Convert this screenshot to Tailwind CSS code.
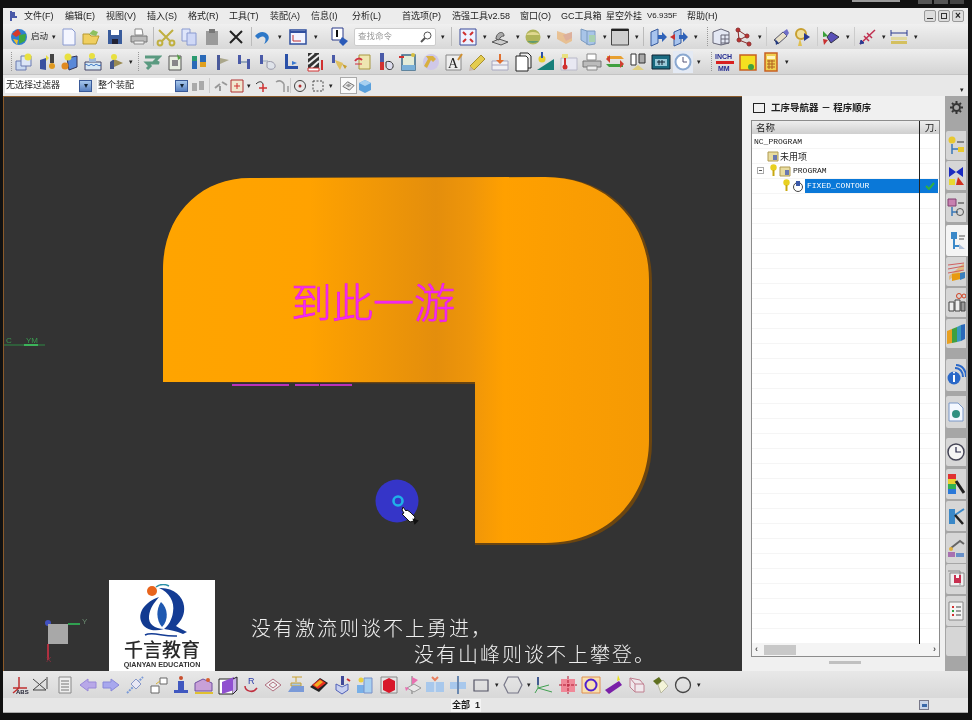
<!DOCTYPE html>
<html lang="zh-CN">
<head>
  <meta charset="UTF-8">
  <title>NX - 工序导航器</title>
  <script src="https://cdn.jsdelivr.net/npm/@tailwindcss/browser@4"></script>
</head>
<body class="bg-[#111]">
<div class="w-[972px] h-[720px] overflow-hidden flex flex-col bg-[#111] text-[#222] font-['Liberation_Sans','Noto_Sans_CJK_SC',sans-serif] blur-[0.5px]">
  <!-- title bar, cut off by the recording -->
  <div class="h-[8px] shrink-0 relative overflow-hidden">
    <span class="absolute left-[852px] top-0 w-[48px] h-[2px] bg-[#999]"></span>
    <span class="absolute left-[918px] top-0 w-[14px] h-[4px] bg-[#555]"></span>
    <span class="absolute left-[934px] top-0 w-[14px] h-[4px] bg-[#555]"></span>
    <span class="absolute left-[950px] top-0 w-[14px] h-[4px] bg-[#444]"></span>
  </div>

  <div class="ml-[3px] w-[965px] flex flex-col bg-[#e4e4e4]">
    <!-- menu -->
    <div class="h-[16px] flex items-center text-[9px] leading-none bg-[#ececec] whitespace-nowrap">
      <svg class="w-[12px] h-[12px] ml-[5px]" viewBox="0 0 12 12"><path d="M3 1v10M3 3h3v2H3M3 7h6" stroke="#4a5aa8" stroke-width="2" fill="none"/></svg>
      <span class="ml-[4px] w-[31px]">文件(F)</span>
      <span class="ml-[10px] w-[31px]">编辑(E)</span>
      <span class="ml-[10px] w-[31px]">视图(V)</span>
      <span class="ml-[10px] w-[31px]">插入(S)</span>
      <span class="ml-[10px] w-[31px]">格式(R)</span>
      <span class="ml-[10px] w-[31px]">工具(T)</span>
      <span class="ml-[10px] w-[31px]">装配(A)</span>
      <span class="ml-[10px] w-[31px]">信息(I)</span>
      <span class="ml-[10px] w-[31px]">分析(L)</span>
      <span class="ml-[19px] w-[40px]">首选项(P)</span>
      <span class="ml-[10px] w-[59px]">浩强工具v2.58</span>
      <span class="ml-[9px] w-[31px]">窗口(O)</span>
      <span class="ml-[10px] w-[36px]">GC工具箱</span>
      <span class="ml-[9px] w-[36px]">星空外挂</span>
      <span class="ml-[5px] w-[31px] text-[8px]">V6.935F</span>
      <span class="ml-[9px] w-[31px]">帮助(H)</span>
      <span class="ml-auto flex gap-[2px] mr-[4px]">
        <span class="w-[12px] h-[12px] border border-[#999] rounded-[2px] bg-[#ddd] flex items-end justify-center pb-[2px]"><i class="block w-[6px] h-[1px] bg-[#333]"></i></span>
        <span class="w-[12px] h-[12px] border border-[#999] rounded-[2px] bg-[#ddd] flex items-center justify-center"><i class="block w-[6px] h-[6px] border border-[#333]"></i></span>
        <span class="w-[12px] h-[12px] border border-[#999] rounded-[2px] bg-[#ddd] flex items-center justify-center text-[10px] font-bold">×</span>
      </span>
    </div>

    <!-- toolbar 1 -->
    <div class="h-[25px] flex items-center bg-gradient-to-b from-[#f0f0f0] to-[#d8d8d8]">
      <svg class="w-5 h-5 ml-[6px]" viewBox="0 0 20 20"><circle cx="10" cy="10" r="8" fill="#2f7fd0"/><path d="M3 7l6-5 3 5-5 3z" fill="#d83a2a"/><path d="M10 8l7-1-1 7-6 3z" fill="#3fa83f"/><path d="M4 12l5 1-1 5z" fill="#f0c030"/></svg>
      <span class="ml-[2px] w-[17px] text-[8.5px] leading-none">启动</span>
      <span class="ml-[3px] w-[6px] text-center text-[7px] leading-none">▾</span>
      <svg class="w-5 h-5 ml-[2px]" viewBox="0 0 20 20"><path d="M4 2h9l3 3v13H4z" fill="#f4f6ff" stroke="#8a9ad0"/></svg>
      <svg class="w-5 h-5 ml-[2px]" viewBox="0 0 20 20"><path d="M2 7h6l2 2h8l-3 8H2z" fill="#f0cf60" stroke="#b89a30"/><path d="M8 7l4-4 5 2-2 4z" fill="#8cc060"/></svg>
      <svg class="w-5 h-5 ml-[4px]" viewBox="0 0 20 20"><path d="M3 3h14v14H3z" fill="#3a5c9c"/><path d="M6 3h8v5H6z" fill="#fff"/><path d="M7 12h6v5H7z" fill="#223"/></svg>
      <svg class="w-5 h-5 ml-[4px]" viewBox="0 0 20 20"><path d="M6 2h7l1 6H6z" fill="#fff" stroke="#888"/><path d="M2 9h16v6H2z" fill="#bbb" stroke="#777"/><path d="M5 14h10v3H5z" fill="#eee" stroke="#888"/></svg>
      <i class="block w-px h-[19px] ml-[4px] bg-[#bbb]"></i>
      <svg class="w-5 h-5 ml-[2px]" viewBox="0 0 20 20" fill="none" stroke="#c0b040" stroke-width="2"><path d="M3 3l11 11M17 3L6 14"/><circle cx="4" cy="16" r="2.4"/><circle cx="16" cy="16" r="2.4"/></svg>
      <svg class="w-5 h-5 ml-[3px]" viewBox="0 0 20 20"><path d="M3 2h8v12H3z" fill="#dfe6fa" stroke="#8a9ad0"/><path d="M8 6h9v12H8z" fill="#cfd8f6" stroke="#8a9ad0"/></svg>
      <svg class="w-5 h-5 ml-[3px]" viewBox="0 0 20 20"><path d="M4 4h12v14H4z" fill="#9a9a9a"/><path d="M7 2h6v4H7z" fill="#777"/></svg>
      <svg class="w-5 h-5 ml-[4px]" viewBox="0 0 20 20"><path d="M4 4l12 12M16 4L4 16" stroke="#222" stroke-width="2"/></svg>
      <i class="block w-px h-[19px] ml-[5px] bg-[#bbb]"></i>
      <svg class="w-5 h-5" viewBox="0 0 20 20"><path d="M3 9c4-5 10-5 13-1 2 3 0 7-4 9 2-3 2-6 0-7-2-1-4 0-6 2l-3-3z" fill="#2d78c8"/></svg>
      <span class="ml-[5px] w-[6px] text-center text-[7px] leading-none">▾</span>
      <svg class="w-5 h-5 ml-[5px]" viewBox="0 0 20 20"><path d="M2 3h16v14H2z" fill="#f2f4ff" stroke="#2f4f9f" stroke-width="1.5"/><path d="M2 5h16" stroke="#2f4f9f" stroke-width="2"/><path d="M5 8v6h8" stroke="#c03030" fill="none"/></svg>
      <span class="ml-[5px] w-[6px] text-center text-[7px] leading-none">▾</span>
      <svg class="w-5 h-5 ml-[10px]" viewBox="0 0 20 20"><path d="M3 1h11v12H3z" fill="#fff" stroke="#2a3a8a"/><path d="M8 3v7" stroke="#111" stroke-width="2"/><path d="M13 10l6 4-5 5-4-4z" fill="#2a5ab8"/></svg>
      <div class="ml-[5px] w-[82px] h-[18px] bg-white border border-[#ccc] rounded-[2px] flex items-center px-[3px] text-[8.5px] text-[#999] leading-none shrink-0">
        查找命令
        <svg class="w-[12px] h-[12px] ml-auto" viewBox="0 0 12 12" fill="none" stroke="#555"><circle cx="7.5" cy="4.5" r="3.5"/><path d="M5 7l-4 4" stroke-width="2"/></svg>
      </div>
      <span class="ml-[4px] w-[6px] text-center text-[7px] leading-none">▾</span>
      <i class="block w-px h-[19px] ml-[5px] bg-[#bbb]"></i>
      <svg class="w-5 h-5 ml-[6px]" viewBox="0 0 20 20"><path d="M2 2h16v16H2z" fill="#eef2ff" stroke="#3a4a9a"/><path d="M5 5l3 3M15 5l-3 3M5 15l3-3M15 15l-3-3" stroke="#d03030" stroke-width="2"/></svg>
      <span class="ml-[4px] w-[6px] text-center text-[7px] leading-none">▾</span>
      <svg class="w-5 h-5 ml-[2px]" viewBox="0 0 20 20"><path d="M2 15l7-3 9 3-7 3z" fill="#ccc" stroke="#555"/><path d="M6 12c0-7 8-9 8-3-2 0-4 1-5 4z" fill="#aaa" stroke="#555"/></svg>
      <span class="ml-[5px] w-[6px] text-center text-[7px] leading-none">▾</span>
      <svg class="w-5 h-5 ml-[2px]" viewBox="0 0 20 20"><circle cx="10" cy="10" r="7.5" fill="#b0b45a"/><path d="M3 8a8 6 0 0 1 14 0z" fill="#e0d890"/><path d="M4 14a8 6 0 0 0 12 0z" fill="#5f9a70"/></svg>
      <span class="ml-[3px] w-[6px] text-center text-[7px] leading-none">▾</span>
      <svg class="w-5 h-5 ml-[3px]" viewBox="0 0 20 20"><path d="M2 4l9 3 6-2v9l-6 3-9-5z" fill="#e8b880" opacity=".8"/><path d="M8 8l9-3v6l-6 3z" fill="#d8a8a0" opacity=".7"/></svg>
      <svg class="w-5 h-5 ml-[3px]" viewBox="0 0 20 20"><path d="M3 2l6 2h8v13l-6 1-8-5z" fill="#a8c4e8" stroke="#7a9ac0"/><path d="M9 4v14" stroke="#7a9ac0"/><path d="M11 8h6v7h-6z" fill="#a8d0b0"/></svg>
      <span class="ml-[4px] w-[6px] text-center text-[7px] leading-none">▾</span>
      <svg class="w-5 h-5 ml-[2px]" viewBox="0 0 20 20"><path d="M1.5 2h17v16h-17z" fill="#cfcfcf" stroke="#444"/><path d="M1.5 3h17" stroke="#222" stroke-width="2"/></svg>
      <span class="ml-[4px] w-[6px] text-center text-[7px] leading-none">▾</span>
      <i class="block w-px h-[19px] ml-[3px] bg-[#bbb]"></i>
      <svg class="w-5 h-5 ml-[4px]" viewBox="0 0 20 20"><path d="M3 5l7-3v14l-7 3z" fill="#a8c4ee" stroke="#34589c"/><path d="M10 8h4V5l5 5-5 5v-3h-4z" fill="#2f62b8"/></svg>
      <svg class="w-5 h-5 ml-[1px]" viewBox="0 0 20 20"><path d="M5 5l7-3v14l-7 3z" fill="#a8c4ee" stroke="#34589c"/><path d="M10 8h4V5l5 5-5 5v-3h-4z" fill="#2f62b8"/><path d="M1 10l5-3v6z" fill="#c83030"/></svg>
      <span class="ml-[4px] w-[6px] text-center text-[7px] leading-none">▾</span>
      <i class="block w-px h-[19px] ml-[8px] border-l border-dotted border-[#999]"></i>
      <svg class="w-5 h-5 ml-[3px]" viewBox="0 0 20 20"><path d="M2 5l8-3 8 3v11l-8 2-8-2z" fill="#e4e8f4" stroke="#667"/><path d="M10 8h8M10 12h8M10 16h8M10 8v10M14 8v9" stroke="#667"/></svg>
      <svg class="w-5 h-5 ml-[2px]" viewBox="0 0 20 20" fill="none" stroke="#8a3030"><path d="M5 3l9 6-8 4 10 4M5 3l1 10"/><circle cx="5" cy="3" r="2" fill="#c03030"/><circle cx="14" cy="9" r="2" fill="#c03030"/><circle cx="6" cy="13" r="2" fill="#c03030"/><circle cx="16" cy="17" r="2" fill="#c03030"/></svg>
      <span class="ml-[4px] w-[6px] text-center text-[7px] leading-none">▾</span>
      <i class="block w-px h-[19px] ml-[3px] bg-[#ccc]"></i>
      <svg class="w-5 h-5 ml-[4px]" viewBox="0 0 20 20"><path d="M3 13l9-8 4 4-9 8z" fill="#e8e0c8" stroke="#556"/><path d="M12 5l4-3 2 4-2 3z" fill="#7070c8"/><path d="M4 12l4 4-3 2z" fill="#223a80"/></svg>
      <svg class="w-5 h-5 ml-[2px]" viewBox="0 0 20 20"><circle cx="8" cy="7" r="5" fill="#f0e0a0" stroke="#c8a030" stroke-width="2"/><path d="M7 11l-2 8h4z" fill="#e0c050"/><path d="M11 6l6 4-6 4z" fill="#2a3a90"/></svg>
      <i class="block w-px h-[19px] ml-[4px] bg-[#ccc]"></i>
      <svg class="w-5 h-5 ml-[4px]" viewBox="0 0 20 20"><path d="M9 5l8 5-8 6-4-6z" fill="#5a50b8" stroke="#334"/><path d="M1 4l5 5-5 1z" fill="#38a038"/><path d="M1 12l5 1-4 5z" fill="#c83030"/></svg>
      <span class="ml-[3px] w-[6px] text-center text-[7px] leading-none">▾</span>
      <i class="block w-px h-[19px] ml-[3px] bg-[#ccc]"></i>
      <svg class="w-5 h-5 ml-[3px]" viewBox="0 0 20 20" stroke="#c03050" fill="none"><path d="M2 17L17 3M6 9l5 5M9 6l5 5" stroke-width="1.5"/><path d="M2 17l4-1-3-3z" fill="#2a3a90" stroke="#2a3a90"/></svg>
      <span class="ml-[3px] w-[6px] text-center text-[7px] leading-none">▾</span>
      <svg class="w-5 h-5 ml-[2px]" viewBox="0 0 20 20"><path d="M2 6h16M2 3v6M18 3v6" stroke="#2a3a90" fill="none"/><path d="M2 10h16v3H2z" fill="#e0d8a0"/><path d="M2 14h16v3H2z" fill="#d4c060"/></svg>
      <span class="ml-[4px] w-[6px] text-center text-[7px] leading-none">▾</span>
    </div>

    <!-- toolbar 2 -->
    <div class="h-[26px] flex items-center bg-gradient-to-b from-[#eeeeee] to-[#d4d4d4] border-b border-[#c4c4c4]">
      <i class="block w-px h-[19px] ml-[8px] border-l border-dotted border-[#999]"></i>
      <svg class="w-5 h-5 ml-[2px]" viewBox="0 0 20 20"><path d="M2 9h10v9H2z" fill="#c8d8f0" stroke="#6a7ab0"/><path d="M7 4h10v10H7z" fill="#dde6f6" stroke="#6a7ab0"/><circle cx="14" cy="5" r="3.5" fill="#e8e040"/></svg>
      <svg class="w-5 h-5 ml-[3px]" viewBox="0 0 20 20"><path d="M3 8l6-2v12l-6-1z" fill="#3a50a0"/><path d="M9 3l3 3-3 3z" fill="#e8e040"/><path d="M13 2h4v9h-4z" fill="#444"/><circle cx="15" cy="14" r="3" fill="#e09a20"/></svg>
      <svg class="w-5 h-5 ml-[3px]" viewBox="0 0 20 20"><path d="M7 6l10-2v11l-8 3z" fill="#5a88d8" stroke="#335"/><circle cx="5" cy="14" r="3.5" fill="#e08a20"/><circle cx="8" cy="5" r="3.5" fill="#e8e040"/></svg>
      <svg class="w-5 h-5 ml-[3px]" viewBox="0 0 20 20"><path d="M2 10h16v8H2z" fill="#d8e8f4" stroke="#446"/><path d="M2 13c2-2 3 2 5 0s3 2 5 0 3 2 6 0" stroke="#2a68c0" fill="none"/><path d="M6 6h7v4H6z" fill="#a0b8d8"/><circle cx="9" cy="4" r="3" fill="#e8e040"/></svg>
      <svg class="w-5 h-5 ml-[3px]" viewBox="0 0 20 20"><path d="M4 10l4-3v10H4z" fill="#445588"/><path d="M8 7l9 4-9 4z" fill="#9a8a50"/><circle cx="8" cy="5" r="3" fill="#e8e040"/></svg>
      <span class="ml-[2px] w-[6px] text-center text-[7px] leading-none">▾</span>
      <i class="block w-px h-[19px] ml-[4px] border-l border-dotted border-[#999]"></i>
      <svg class="w-5 h-5 ml-[3px]" viewBox="0 0 20 20"><path d="M3 5h14l-4 4 4 2H5l3 3-3 3" stroke="#5a9a80" stroke-width="3" fill="none"/></svg>
      <svg class="w-5 h-5 ml-[3px]" viewBox="0 0 20 20"><path d="M4 4h12v14H4z" fill="#e8efe0" stroke="#555"/><path d="M7 8h6v6H7z" fill="#888"/><path d="M12 2l4 4-3 2z" fill="#50a040"/></svg>
      <svg class="w-5 h-5 ml-[4px]" viewBox="0 0 20 20"><path d="M3 9h5v8H3z" fill="#2a6ab8"/><path d="M3 4h5v5H3z" fill="#2a9a70"/><path d="M11 3h6v7h-6z" fill="#2a6ab8"/><path d="M11 10h6v5h-6z" fill="#e0a020"/></svg>
      <svg class="w-5 h-5 ml-[2px]" viewBox="0 0 20 20"><path d="M6 3h3v15H6z" fill="#4a5a9a"/><path d="M9 6l9 2-9 4z" fill="#aaa68a"/></svg>
      <svg class="w-5 h-5 ml-[4px]" viewBox="0 0 20 20"><path d="M3 3h3v9H3zM12 7h3v10h-3z" fill="#4a5aa8"/><path d="M6 9h6v2H6z" fill="#9ab"/></svg>
      <svg class="w-5 h-5 ml-[3px]" viewBox="0 0 20 20"><path d="M2 3h3v9H2z" fill="#4a5aa8"/><path d="M5 9h5" stroke="#9ab"/><path d="M9 10c5-2 9 2 8 5s-7 3-8 0z" fill="#dfe3ea" stroke="#99a"/></svg>
      <svg class="w-5 h-5 ml-[3px]" viewBox="0 0 20 20"><path d="M4 2h3v15H4z" fill="#2a50a8"/><path d="M7 14h10v3H7z" fill="#2a50a8"/><path d="M11 9l5 2-5 2z" fill="#3a78d0"/></svg>
      <svg class="w-5 h-5 ml-[4px]" viewBox="0 0 20 20"><path d="M3 1h11v15H3z" fill="#333"/><path d="M3 6l6-5M3 12L14 3M6 16l8-7" stroke="#eee" stroke-width="2"/><path d="M3 16h11v3H3z" fill="#fff" stroke="#d03030"/><path d="M17 8v10" stroke="#d03030" stroke-width="2"/></svg>
      <svg class="w-5 h-5 ml-[4px]" viewBox="0 0 20 20"><path d="M3 3h3v8H3z" fill="#4a5aa8"/><path d="M6 8l8 3-3 7-3-5z" fill="#e0c060"/><path d="M13 12l5 2-2 3z" fill="#c8a030"/></svg>
      <svg class="w-5 h-5 ml-[4px]" viewBox="0 0 20 20"><path d="M6 3h11v14H6z" fill="#eee6b0" stroke="#a89840"/><path d="M2 9c2-3 5-3 7-1" stroke="#d03040" stroke-width="2" fill="none"/><path d="M2 12h7" stroke="#d03040"/></svg>
      <svg class="w-5 h-5 ml-[3px]" viewBox="0 0 20 20"><path d="M4 1h4v9H4z" fill="#4a5aa8"/><path d="M4 10h4v8H4z" fill="#d03030"/><path d="M10 10c4-2 8 1 7 5s-7 3-7-1z" fill="#dde" stroke="#333"/></svg>
      <svg class="w-5 h-5 ml-[2px]" viewBox="0 0 20 20"><path d="M4 3h13v15H4z" fill="#e4ecd8" stroke="#3a6a8a" stroke-width="1.5"/><path d="M4 13h13v5H4z" fill="#7ab0d8"/><path d="M1 5h5" stroke="#d03030" stroke-width="2"/><circle cx="15" cy="3" r="2" fill="#d8c040"/></svg>
      <svg class="w-5 h-5 ml-[3px]" viewBox="0 0 20 20"><circle cx="10" cy="10" r="8" fill="#cfc8e8"/><path d="M5 4h7l3 3-3 3-2-2-4 8-3-2 4-7z" fill="#d8b040"/></svg>
      <svg class="w-5 h-5 ml-[3px]" viewBox="0 0 20 20"><path d="M2 3h15v15H2z" fill="#eee" stroke="#888"/><text x="4" y="16" font-size="14" font-family="Liberation Serif" fill="#222">A</text><path d="M14 8l4-6" stroke="#d09030" stroke-width="2"/></svg>
      <svg class="w-5 h-5 ml-[3px]" viewBox="0 0 20 20"><path d="M3 14L14 3l4 4L7 18z" fill="#e4cc50" stroke="#a89030"/><path d="M3 14l4 4-5 1z" fill="#c8b8b0"/></svg>
      <svg class="w-5 h-5 ml-[3px]" viewBox="0 0 20 20"><path d="M2 9h16v9H2z" fill="#f0f0f4" stroke="#a8a8c0"/><path d="M2 13h16" stroke="#a8a8c0"/><path d="M9 2h2v6h3l-4 4-4-4h3z" fill="#e07030"/></svg>
      <svg class="w-5 h-5 ml-[3px]" viewBox="0 0 20 20"><path d="M7 1h8l3 3v12H7z" fill="#eee" stroke="#222"/><path d="M3 4h10l2 2v13H3z" fill="#fff" stroke="#222"/></svg>
      <svg class="w-5 h-5 ml-[3px]" viewBox="0 0 20 20"><path d="M1 18L18 7v11z" fill="#18807a"/><circle cx="6" cy="7" r="3.5" fill="#e8d030"/><path d="M6 0v6" stroke="#2a50a8" stroke-width="2"/></svg>
      <svg class="w-5 h-5 ml-[3px]" viewBox="0 0 20 20"><path d="M2 6h16v12H2z" fill="#e8e8f2" stroke="#b8b8c8"/><path d="M6 2v12" stroke="#d03030" stroke-width="2"/><circle cx="6" cy="15" r="2.5" fill="#d03030"/><path d="M3 2h6v4H3z" fill="#e8e080"/></svg>
      <svg class="w-5 h-5 ml-[3px]" viewBox="0 0 20 20"><path d="M5 2h9v6H5z" fill="#fff" stroke="#888"/><path d="M1 9h18v6H1z" fill="#bbb" stroke="#777"/><path d="M5 14h10v4H5z" fill="#eee" stroke="#888"/></svg>
      <svg class="w-5 h-5 ml-[3px]" viewBox="0 0 20 20"><path d="M2 4h14l3 3H2z" fill="#e8a030"/><path d="M18 15H4l-3-3h17z" fill="#40a040"/><path d="M1 7l4-4v8zM19 12l-4 4V8z" fill="#d04030"/></svg>
      <svg class="w-5 h-5 ml-[3px]" viewBox="0 0 20 20"><path d="M3 2h5v11H3z" fill="#fff" stroke="#333"/><path d="M11 2h6v9h-6z" fill="#aaa" stroke="#333"/><path d="M4 18l6-5 6 5z" fill="#e0d080"/></svg>
      <svg class="w-5 h-5 ml-[3px]" viewBox="0 0 20 20"><path d="M1 3h18v14H1z" fill="#1a6a80" stroke="#123"/><path d="M4 7h12v7H4z" fill="#9ac8d8"/><path d="M6 10h8M8 8v5M11 8v5" stroke="#123"/></svg>
      <span class="ml-[2px] w-[20px] h-[22px] bg-[#e4eaf4] flex items-center justify-center"><svg class="w-[18px] h-[18px]" viewBox="0 0 18 18"><circle cx="9" cy="9" r="7.5" fill="#fff" stroke="#8aa8d0" stroke-width="2"/><path d="M9 4v5h4" stroke="#557" fill="none"/></svg></span>
      <span class="ml-[3px] w-[6px] text-center text-[7px] leading-none">▾</span>
      <i class="block w-px h-[19px] ml-[9px] border-l border-dotted border-[#999]"></i>
      <svg class="w-5 h-5 ml-[3px]" viewBox="0 0 20 20"><text x="0" y="7" font-size="7" font-weight="700" font-family="Liberation Sans" fill="#222a90">INCH</text><path d="M1 9h18v3H1z" fill="#d82020"/><text x="3" y="19" font-size="7" font-weight="700" font-family="Liberation Sans" fill="#222a90">MM</text></svg>
      <svg class="w-5 h-5 ml-[3px]" viewBox="0 0 20 20"><path d="M2 3h16v15H2z" fill="#f4e020" stroke="#c86020" stroke-width="1.5"/><circle cx="13" cy="15" r="3" fill="#40a040"/></svg>
      <svg class="w-5 h-5 ml-[3px]" viewBox="0 0 20 20"><path d="M4 1h12v18H4z" fill="#f0d050" stroke="#c86020" stroke-width="1.5"/><path d="M6 4h8v3H6z" fill="#fff6c0"/><path d="M6 9h8M6 12h8M6 15h8M8 8v9M11 8v9" stroke="#b06020"/></svg>
      <span class="ml-[3px] w-[6px] text-center text-[7px] leading-none">▾</span>
    </div>

    <!-- selection bar -->
    <div class="h-[21px] flex items-center bg-[#e8e8e8] text-[9px] leading-none">
      <div class="ml-[2px] w-[74px] h-[15px] bg-white flex items-center px-[1px] shrink-0">无选择过滤器</div>
      <span class="w-[13px] h-[12px] bg-gradient-to-b from-[#a8c8ec] to-[#5880c0] border border-[#3a5a98] flex items-center justify-center text-[8px] text-[#123]">▾</span>
      <div class="ml-[5px] w-[78px] h-[15px] bg-white flex items-center px-[1px] shrink-0">整个装配</div>
      <span class="w-[13px] h-[12px] bg-gradient-to-b from-[#a8c8ec] to-[#5880c0] border border-[#3a5a98] flex items-center justify-center text-[8px] text-[#123]">▾</span>
      <svg class="w-[14px] h-[14px] ml-[3px]" viewBox="0 0 14 14"><path d="M1 4h5v8H1zM8 2h5v9H8z" fill="#aaa"/></svg>
      <i class="block w-px h-[15px] ml-[4px] bg-[#ccc]"></i>
      <svg class="w-[14px] h-[14px] ml-[4px]" viewBox="0 0 14 14" fill="none" stroke="#999" stroke-width="2"><path d="M1 9l5-4M8 3l5 3M6 7v5"/></svg>
      <svg class="w-[14px] h-[14px] ml-[2px]" viewBox="0 0 14 14"><path d="M1 1h12v12H1z" fill="#f0e8d0" stroke="#b03030"/><path d="M7 4v6M4 7h6" stroke="#d03030"/></svg>
      <span class="ml-[2px] w-[6px] text-center text-[7px]">▾</span>
      <svg class="w-[14px] h-[14px] ml-[3px]" viewBox="0 0 14 14" fill="none"><path d="M1 5c3-3 6-3 7 0" stroke="#333"/><path d="M8 5v8M4 9h8" stroke="#d03030" stroke-width="1.5"/></svg>
      <svg class="w-[14px] h-[14px] ml-[6px]" viewBox="0 0 14 14" fill="none" stroke="#999"><path d="M1 3c3-2 6-1 8 2M9 5v8M13 7v6" stroke-width="1.5"/></svg>
      <i class="block w-px h-[15px] ml-[1px] bg-[#ccc]"></i>
      <svg class="w-[14px] h-[14px] ml-[2px]" viewBox="0 0 14 14" fill="none"><circle cx="7" cy="7" r="5.5" stroke="#444"/><circle cx="7" cy="7" r="1.5" fill="#b03030"/></svg>
      <svg class="w-[14px] h-[14px] ml-[4px]" viewBox="0 0 14 14" fill="none"><path d="M2 2h10v10H2z" stroke="#444" stroke-dasharray="2 1.5"/></svg>
      <span class="ml-[3px] w-[6px] text-center text-[7px]">▾</span>
      <span class="ml-[6px] w-[17px] h-[17px] bg-[#fafafa] border border-[#aaa] flex items-center justify-center"><svg class="w-[13px] h-[13px]" viewBox="0 0 14 14"><path d="M1 8l5-5 7 4-5 5z" fill="#e8e8e8" stroke="#666"/><path d="M4 7l3-2 3 2-3 2z" fill="#999"/></svg></span>
      <svg class="w-[14px] h-[14px] ml-[1px]" viewBox="0 0 14 14"><path d="M1 4l6-3 6 3v7l-6 3-6-3z" fill="#5aa0dc"/><path d="M1 4l6 3 6-3-6-3z" fill="#a8d0f0"/></svg>
      <span class="ml-auto mr-[4px] text-[7px] self-end mb-[3px]">▾</span>
    </div>

    <!-- main -->
    <div class="h-[575px] flex">
      <!-- graphics window -->
      <div class="w-[739px] shrink-0 relative bg-[#333333] border-l border-t border-[#8a5a2a] overflow-hidden">
        <svg class="absolute left-[-4px] top-[-97px]" width="743" height="672" viewBox="0 0 743 672">
          <defs>
            <linearGradient id="body" x1="163" x2="650" y1="0" y2="0" gradientUnits="userSpaceOnUse">
              <stop offset="0" stop-color="#ffa400"/>
              <stop offset=".3" stop-color="#ffa200"/>
              <stop offset=".56" stop-color="#e48e0c"/>
              <stop offset=".63" stop-color="#ee950a"/>
              <stop offset=".7" stop-color="#ffa000"/>
              <stop offset="1" stop-color="#f59a04"/>
            </linearGradient>
          </defs>
          <path d="M163 382V270C163 215 200 179 250 178L548 177C610 177 652 222 652 282V442C652 500 612 545 548 545H475V384Z" fill="#6b4510"/>
          <path d="M163 382V270C163 215 200 178 250 178L545 177C605 177 649 220 649 280V440C649 498 608 543 545 543H475V382Z" fill="url(#body)"/>
          <path d="M232 385h37M264 385h25M295 385h24M320 385h32" stroke="#e832e8" stroke-width="1.5"/>
          <path d="M3 345h42" stroke="#2f8a45"/>
          <path d="M24 345h14" stroke="#3cb45a" stroke-width="2"/>
          <path d="M68 624h12" stroke="#30a050" stroke-width="2"/>
          <path d="M48 644v16" stroke="#b03040" stroke-width="2"/>
          <circle cx="48" cy="623" r="3" fill="#4050c0"/>
          <path d="M48 624h20v20H48z" fill="#a8a8a8"/>
          <circle cx="397" cy="501" r="21.5" fill="#3535c8"/>
          <circle cx="398" cy="501" r="4.5" fill="none" stroke="#20b0e8" stroke-width="2.6"/>
          <path d="M403 507l3 4 1-1 3 2 2 2 3 3-1 4-4 1-3-3-5-5 2-1-2-3z" fill="#fff" stroke="#111"/>
          <path d="M414 520l3 1-2 2z" fill="#111" stroke="#111" stroke-width="2"/>
        </svg>

        <div class="absolute left-[287px] top-[178px] text-[#f52cf5] text-[41px] leading-[50px] font-['Noto_Sans_CJK_SC',sans-serif] font-light [-webkit-text-stroke:0.7px_#e81ce8] whitespace-nowrap">到此一游</div>
        <div class="absolute left-[2px] top-[240px] text-[8px] leading-none text-[#3a9a50]">C <span class="ml-[12px]">YM</span></div>
        <span class="absolute left-[78px] top-[521px] text-[8px] leading-none text-[#6a8a70]">Y</span>
        <span class="absolute left-[42px] top-[559px] text-[8px] leading-none text-[#903040]">X</span>

        <!-- logo -->
        <div class="absolute left-[105px] bottom-0 w-[106px] h-[91px] bg-white flex flex-col items-center">
          <svg class="mt-[4px] w-[50px] h-[53px]" viewBox="0 0 50 53">
            <circle cx="15" cy="7" r="5" fill="#e8641c"/>
            <path d="M22 13C8 18 1 28 4 37C7 46 17 48 27 45C18 45 11 40 12 32C13 24 17 19 22 13Z" fill="#123a90"/>
            <path d="M22 4C32 8 38 18 36 28C35 36 31 42 27 45C33 46 39 47 46 50L50 48C46 46 42 44 39 42C45 36 48 30 47 22C46 12 36 3 22 4Z" fill="#143c94"/>
            <path d="M24 18C31 24 32 36 25 43C19 36 19 25 24 18Z" fill="#1f58b0"/>
            <path d="M19 3C23 0 28 0 32 2" stroke="#2a90a8" stroke-width="1.5" fill="none"/>
            <path d="M8 51C16 47 26 53 40 52" stroke="#143c94" stroke-width="1.5" fill="none"/>
          </svg>
          <div class="mt-px text-[19px] leading-[22px] font-medium text-[#2a2a2a] font-['Noto_Sans_CJK_SC',sans-serif] whitespace-nowrap">千言教育</div>
          <div class="text-[7.2px] leading-[10px] font-bold text-[#333] whitespace-nowrap">QIANYAN EDUCATION</div>
        </div>

        <!-- subtitle -->
        <div class="absolute left-[247px] top-[518px] text-[20px] leading-[26px] tracking-[2px] text-[#efefef] font-['Noto_Sans_CJK_SC',sans-serif] font-light whitespace-nowrap">没有激流则谈不上勇进，</div>
        <div class="absolute left-[410px] top-[544px] text-[20px] leading-[26px] tracking-[2px] text-[#efefef] font-['Noto_Sans_CJK_SC',sans-serif] font-light whitespace-nowrap">没有山峰则谈不上攀登。</div>
      </div>

      <!-- navigator -->
      <div class="w-[203px] shrink-0 bg-[#f0f0f0] flex flex-col">
        <div class="h-[24px] flex items-center pl-[11px] shrink-0">
          <span class="w-[12px] h-[10px] border-[1.5px] border-[#222]"></span>
          <span class="ml-[6px] text-[9.5px] font-bold leading-none whitespace-nowrap">工序导航器 － 程序顺序</span>
        </div>
        <div class="ml-[9px] w-[189px] h-[537px] border border-[#8c8c8c] bg-white flex flex-col relative text-[8px] leading-none">
          <div class="h-[13px] shrink-0 flex bg-gradient-to-b from-[#eeeeee] to-[#cfcfcf] text-[9.5px] items-center">
            <span class="ml-[4px]">名称</span>
            <span class="ml-auto mr-[2px]">刀.</span>
          </div>
          <div class="flex-1 bg-[repeating-linear-gradient(to_bottom,#ffffff_0,#ffffff_14px,#f5f5f5_14px,#f5f5f5_15px)] font-['Liberation_Mono','Noto_Sans_CJK_SC',monospace]">
            <div class="h-[15px] flex items-center pl-[2px]">NC_PROGRAM</div>
            <div class="h-[14px] flex items-center pl-[15px] font-['Noto_Sans_CJK_SC',sans-serif] text-[9px]">
              <svg class="w-[12px] h-[12px]" viewBox="0 0 12 12"><path d="M1 2h10v9H1z" fill="#e8dca0" stroke="#b09a50"/><path d="M6 5h4v5H6z" fill="#6a78b0"/></svg>
              <span class="ml-[1px]">未用项</span>
            </div>
            <div class="h-[15px] flex items-center pl-[5px]">
              <span class="w-[7px] h-[7px] border border-[#aaa] flex items-center justify-center"><i class="block w-[3px] h-px bg-[#555]"></i></span>
              <svg class="ml-[6px] w-[7px] h-[13px]" viewBox="0 0 7 13"><circle cx="3.5" cy="3.5" r="3.2" fill="#e8d020"/><path d="M2.5 6h2v6h-2z" fill="#c8a810"/></svg>
              <svg class="ml-[2px] w-[12px] h-[12px]" viewBox="0 0 12 12"><path d="M1 2h10v9H1z" fill="#e8dca0" stroke="#b09a50"/><path d="M6 5h4v5H6z" fill="#6a78b0"/></svg>
              <span class="ml-[2px]">PROGRAM</span>
            </div>
            <div class="h-[15px] flex items-center pl-[31px]">
              <svg class="w-[7px] h-[13px]" viewBox="0 0 7 13"><circle cx="3.5" cy="3.5" r="3.2" fill="#e8d020"/><path d="M2.5 6h2v6h-2z" fill="#c8a810"/></svg>
              <svg class="ml-[2px] w-[12px] h-[12px]" viewBox="0 0 12 12" fill="none"><circle cx="6" cy="7" r="4.5" stroke="#444"/><path d="M4 1h4v5H4z" fill="#3a58a8"/></svg>
              <span class="ml-[1px] flex-1 h-[14px] bg-[#0a78d8] text-white flex items-center pl-[2px] mr-[1px]">FIXED_CONTOUR
                <svg class="ml-auto mr-[3px] w-[10px] h-[8px]" viewBox="0 0 10 8"><path d="M1 4l3 3 5-6" stroke="#30b040" stroke-width="2" fill="none"/></svg>
              </span>
            </div>
          </div>
          <div class="h-[13px] shrink-0 flex items-center bg-[#f4f4f4] text-[#555] text-[9px] font-bold px-[3px]">
            <span>‹</span>
            <span class="ml-[6px] w-[32px] h-[10px] bg-[#c8c8c8]"></span>
            <span class="ml-auto">›</span>
          </div>
          <i class="block absolute left-[167px] top-0 bottom-[12px] w-px bg-[#222]"></i>
        </div>
        <div class="h-[3px] w-[32px] ml-[87px] mt-[4px] bg-[#c0c0c0]"></div>
      </div>

      <!-- resource bar -->
      <div class="w-[23px] shrink-0 bg-[#a6a6a6] flex flex-col pl-[1px] relative">
        <svg class="absolute left-[5px] top-[5px] w-[13px] h-[13px]" viewBox="0 0 13 13" fill="none" stroke="#333" stroke-width="2"><circle cx="6.5" cy="6.5" r="3.5"/><path d="M6.5 0v2M6.5 11v2M0 6.5h2M11 6.5h2M2 2l1.4 1.4M9.6 9.6L11 11M2 11l1.4-1.4M9.6 3.4L11 2"/></svg>
        <div class="mt-[35px] w-[20px] h-[29px] bg-[#d6d6d6] rounded-l-[2px] flex items-center justify-center"><svg class="w-[18px] h-[20px]" viewBox="0 0 18 20"><circle cx="5" cy="4" r="3.5" fill="#e8c830"/><path d="M5 8v10M5 13h7" stroke="#3a78b8" stroke-width="1.5"/><path d="M11 11h6v5h-6z" fill="#e8c830"/><path d="M10 6h7" stroke="#333"/></svg></div>
        <div class="mt-px w-[20px] h-[29px] bg-[#d6d6d6] rounded-l-[2px] flex items-center justify-center"><svg class="w-[18px] h-[20px]" viewBox="0 0 18 20"><path d="M2 1l7 5 7-5v10l-7-5-7 5z" fill="#1a2ac0"/><path d="M2 13h6v6H2z" fill="#e8d830"/><path d="M11 11l6 8h-8z" fill="#d03020"/></svg></div>
        <div class="mt-[3px] w-[20px] h-[29px] bg-[#d6d6d6] rounded-l-[2px] flex items-center justify-center"><svg class="w-[18px] h-[20px]" viewBox="0 0 18 20"><path d="M1 1h8v7H1z" fill="#c880b0" stroke="#804070"/><path d="M5 9v9M5 14h6" stroke="#3a78b8" stroke-width="1.5"/><circle cx="13" cy="14" r="3.5" fill="none" stroke="#555"/><path d="M11 5h6" stroke="#333"/></svg></div>
        <div class="mt-[3px] w-[22px] h-[31px] bg-[#f4f4f4] rounded-l-[2px] flex items-center justify-center"><svg class="w-[18px] h-[22px]" viewBox="0 0 18 22"><path d="M3 2h6v7H3z" fill="#3a88c8"/><path d="M6 9v10M6 16h5" stroke="#3a88c8" stroke-width="2"/><path d="M11 6h6M11 9h5" stroke="#555"/><path d="M11 14l6 5h-6z" fill="#b0c0d8"/></svg></div>
        <div class="mt-px w-[20px] h-[29px] bg-[#d6d6d6] rounded-l-[2px] flex items-center justify-center"><svg class="w-[19px] h-[20px]" viewBox="0 0 19 20"><path d="M2 14L17 1v6L2 18z" fill="#e8a030" opacity=".5"/><path d="M1 3l16-2M1 7l16-3M1 11l16-3" stroke="#d06060"/><path d="M5 12l13-2v6L5 19z" fill="#e89a10"/><path d="M13 11l5-1v6l-5 2z" fill="#3a80c0"/></svg></div>
        <div class="mt-[2px] w-[20px] h-[29px] bg-[#d6d6d6] rounded-l-[2px] flex items-center justify-center"><svg class="w-[19px] h-[20px]" viewBox="0 0 19 20"><circle cx="12" cy="3" r="2.5" fill="none" stroke="#d04020"/><circle cx="17" cy="3" r="2" fill="none" stroke="#d04020"/><path d="M2 9h5v9H2zM8 7h5v11H8z" fill="#eee" stroke="#444"/><path d="M14 9h4v9h-4z" fill="#999" stroke="#444"/></svg></div>
        <div class="mt-[2px] w-[20px] h-[29px] bg-[#d6d6d6] rounded-l-[2px] flex items-center justify-center"><svg class="w-[20px] h-[22px]" viewBox="0 0 20 22"><path d="M1 8l5-2v14l-5 1z" fill="#e8a020"/><path d="M6 6l5-2v15l-5 1z" fill="#40a040"/><path d="M11 4l4-2v16l-4 1z" fill="#3a98c0"/><path d="M15 2l4-1v15l-4 2z" fill="#2a68b8"/></svg></div>
        <div class="mt-[11px] w-[20px] h-[32px] bg-[#d6d6d6] rounded-l-[2px] flex items-center justify-center"><svg class="w-[19px] h-[22px]" viewBox="0 0 19 22" fill="none"><circle cx="7" cy="14" r="6.5" fill="#2a68c8"/><path d="M7 11v7" stroke="#fff" stroke-width="2"/><circle cx="7" cy="8.5" r="1" fill="#fff"/><path d="M8 4c5 0 8 4 8 9M9 1c6 0 10 5 10 12" stroke="#2a68c8" stroke-width="2"/></svg></div>
        <div class="mt-[5px] w-[20px] h-[32px] bg-[#d6d6d6] rounded-l-[2px] flex items-center justify-center"><svg class="w-[16px] h-[20px]" viewBox="0 0 16 20"><path d="M1 1h9l5 5v13H1z" fill="#f4f8ff" stroke="#7a98c8"/><circle cx="8" cy="12" r="4" fill="#309080"/></svg></div>
        <div class="mt-[10px] w-[20px] h-[28px] bg-[#d6d6d6] rounded-l-[2px] flex items-center justify-center"><svg class="w-[18px] h-[18px]" viewBox="0 0 18 18"><circle cx="9" cy="9" r="8" fill="#f4f4f4" stroke="#445" stroke-width="1.5"/><path d="M9 4v5h5" stroke="#224" stroke-width="1.2" fill="none"/></svg></div>
        <div class="mt-[3px] w-[20px] h-[30px] bg-[#d6d6d6] rounded-l-[2px] flex items-center justify-center"><svg class="w-[18px] h-[24px]" viewBox="0 0 18 24"><path d="M1 2h8v5H1z" fill="#e03030"/><path d="M1 7h8v5H1z" fill="#e8d030"/><path d="M1 12h8v5H1z" fill="#30b050"/><path d="M1 17h8v5H1z" fill="#2a78d8"/><path d="M9 9l8 12" stroke="#222" stroke-width="3"/></svg></div>
        <div class="mt-[2px] w-[20px] h-[30px] bg-[#d6d6d6] rounded-l-[2px] flex items-center justify-center"><svg class="w-[18px] h-[20px]" viewBox="0 0 18 20"><path d="M2 3h6v15H2z" fill="#3a88c8"/><path d="M8 9l9-6" stroke="#3a88c8" stroke-width="2"/><path d="M8 9l8 9" stroke="#222" stroke-width="2.5"/></svg></div>
        <div class="mt-[2px] w-[20px] h-[30px] bg-[#d6d6d6] rounded-l-[2px] flex items-center justify-center"><svg class="w-[18px] h-[20px]" viewBox="0 0 18 20"><path d="M4 10l9-7 4 3" stroke="#666" stroke-width="2" fill="none"/><path d="M1 14h7v5H1z" fill="#a870b0"/><path d="M9 15h8v4H9z" fill="#6890c8"/><circle cx="4" cy="11" r="2" fill="#e0b040"/></svg></div>
        <div class="mt-px w-[20px] h-[30px] bg-[#d6d6d6] rounded-l-[2px] flex items-center justify-center"><svg class="w-[18px] h-[20px]" viewBox="0 0 18 20"><path d="M3 4h14v13H3z" fill="#f0f0f0" stroke="#888"/><path d="M1 2h12v14" fill="none" stroke="#888"/><path d="M7 6h7v8H7z" fill="#c83050"/><path d="M9 6v3h3V6" fill="#f8f8f8"/></svg></div>
        <div class="mt-[2px] w-[20px] h-[30px] bg-[#d6d6d6] rounded-l-[2px] flex items-center justify-center"><svg class="w-[18px] h-[20px]" viewBox="0 0 18 20"><path d="M2 1h14v18H2z" fill="#f4f4f4" stroke="#888"/><path d="M5 5h2v2H5z" fill="#d03030"/><path d="M5 9h2v2H5z" fill="#30a040"/><path d="M5 13h2v2H5z" fill="#d03030"/><path d="M9 6h5M9 10h5M9 14h5" stroke="#444"/></svg></div>
        <div class="mt-px w-[20px] h-[29px] bg-[#d6d6d6] rounded-l-[2px]"></div>
      </div>
    </div>

    <!-- bottom toolbar -->
    <div class="h-[27px] flex items-center bg-gradient-to-b from-[#e8e8e8] to-[#d8d8d8]">
      <svg class="w-5 h-5 ml-[7px]" viewBox="0 0 20 20"><path d="M9 2v11M3 13h14M9 13l-6 5" stroke="#c03030" stroke-width="1.5"/><text x="6" y="19" font-size="6" font-weight="700" font-family="Liberation Sans" fill="#223">ABS</text></svg>
      <svg class="w-5 h-5 ml-[1px]" viewBox="0 0 20 20" fill="none" stroke="#444"><path d="M2 4l13 11M15 4L2 15M2 15h13M16 2v12"/></svg>
      <svg class="w-5 h-5 ml-[4px]" viewBox="0 0 20 20"><path d="M4 2h12v16H4z" fill="#eee" stroke="#888"/><path d="M6 6h8M6 9h8M6 12h8M6 15h8" stroke="#777"/></svg>
      <svg class="w-5 h-5 ml-[3px]" viewBox="0 0 20 20"><path d="M2 10l8-6v3h8v6h-8v3z" fill="#b8a8e8" stroke="#9888d8"/></svg>
      <svg class="w-5 h-5 ml-[3px]" viewBox="0 0 20 20"><path d="M18 10l-8-6v3H2v6h8v3z" fill="#a8a8ee" stroke="#8888d8"/></svg>
      <svg class="w-5 h-5 ml-[4px]" viewBox="0 0 20 20"><path d="M2 18L18 2" stroke="#7a9ad8" stroke-dasharray="2 1" stroke-width="2"/><path d="M6 9l5-5 5 5-5 5z" fill="#e8e8f4" stroke="#8898c8"/></svg>
      <svg class="w-5 h-5 ml-[4px]" viewBox="0 0 20 20"><path d="M2 11h8v7H2zM11 3h7v6h-7z" fill="#fff" stroke="#666"/><path d="M7 9l4-3" stroke="#d8b030"/></svg>
      <svg class="w-5 h-5 ml-[2px]" viewBox="0 0 20 20"><path d="M7 6h6v9H7zM3 15h14v3H3z" fill="#4058c0"/><circle cx="10" cy="3" r="2" fill="#c85030"/></svg>
      <svg class="w-5 h-5 ml-[3px]" viewBox="0 0 20 20"><path d="M1 8l8-4 9 4v8H1z" fill="#c8a0d8" stroke="#7050a0"/><path d="M1 18h18" stroke="#e0c030" stroke-width="2"/><circle cx="14" cy="5" r="2" fill="#d86030"/></svg>
      <svg class="w-5 h-5 ml-[4px]" viewBox="0 0 20 20"><path d="M1 4h14v15H1z" fill="#fff" stroke="#222"/><path d="M4 7l12-5v13L4 19z" fill="#9050d0"/><path d="M15 4l4-2v13l-4 4" fill="#c8b0e8" stroke="#222"/></svg>
      <svg class="w-5 h-5 ml-[3px]" viewBox="0 0 20 20" fill="none"><path d="M4 11c0 5 8 8 12 2" stroke="#c03040" stroke-width="1.5"/><text x="7" y="9" font-size="9" font-family="Liberation Sans" fill="#2a3aa8">R</text></svg>
      <svg class="w-5 h-5 ml-[2px]" viewBox="0 0 20 20" fill="#f0f0f0" stroke="#b07080"><path d="M2 10l8-6 8 6-8 6z"/><path d="M6 10l4-3 4 3-4 3z"/></svg>
      <svg class="w-5 h-5 ml-[3px]" viewBox="0 0 20 20"><path d="M6 2h10M10 2v5M5 8h10v3H5z" stroke="#c8a030" fill="#a8c8e8"/><path d="M2 17l4-6h12v6z" fill="#7a9ad8"/></svg>
      <svg class="w-5 h-5 ml-[3px]" viewBox="0 0 20 20"><path d="M1 12L11 3l8 5-9 9z" fill="#222"/><path d="M3 10l8-6 6 4-8 6z" fill="#e83020"/><path d="M5 10l6-5 3 2-6 5z" fill="#f0b020"/></svg>
      <svg class="w-5 h-5 ml-[3px]" viewBox="0 0 20 20"><path d="M4 9l6 3 6-3v6l-6 4-6-4z" fill="#c8d0f0" stroke="#5060b8"/><path d="M9 1h3v9H9z" fill="#404898"/><path d="M15 4l3 2" stroke="#d03030" stroke-width="2"/></svg>
      <svg class="w-5 h-5 ml-[3px]" viewBox="0 0 20 20"><path d="M2 10h7v8H2z" fill="#78b0e8"/><path d="M9 3h8v15H9z" fill="#a8d0f0" stroke="#7890c8"/><circle cx="6" cy="5" r="2.5" fill="#e8d040"/></svg>
      <svg class="w-5 h-5 ml-[4px]" viewBox="0 0 20 20"><path d="M2 2h16v16H2z" fill="#e4e4e4" stroke="#888"/><path d="M4 6l6-3 6 3v9l-6 3-6-3z" fill="#d8182a"/></svg>
      <svg class="w-5 h-5 ml-[4px]" viewBox="0 0 20 20"><path d="M9 1v18" stroke="#777"/><path d="M9 2l6 3-6 5z" fill="#e870b0"/><path d="M4 13l7-4 7 4-7 4z" fill="#e8e8e8" stroke="#999"/><path d="M2 12l4 1-3 3z" fill="#e870b0"/></svg>
      <svg class="w-5 h-5 ml-[2px]" viewBox="0 0 20 20"><path d="M1 7h18v10H1z" fill="#a8c8ec"/><path d="M10 7v10" stroke="#eee"/><path d="M7 2l3 3 3-3" stroke="#e88060" fill="none" stroke-width="2"/></svg>
      <svg class="w-5 h-5 ml-[3px]" viewBox="0 0 20 20"><path d="M2 7h16v7H2z" fill="#a8c8ec"/><path d="M10 1v18" stroke="#6a88b0" stroke-width="2"/></svg>
      <svg class="w-5 h-5 ml-[3px]" viewBox="0 0 20 20" fill="none"><path d="M3 5h14v11H3z" stroke="#556" stroke-width="1.2"/></svg>
      <span class="ml-[3px] w-[6px] text-center text-[7px] leading-none">▾</span>
      <svg class="w-5 h-5 ml-[3px]" viewBox="0 0 20 20" fill="none"><path d="M5 2h10l4 8-4 8H5l-4-8z" stroke="#778" stroke-width="1.2"/></svg>
      <span class="ml-[3px] w-[6px] text-center text-[7px] leading-none">▾</span>
      <svg class="w-5 h-5 ml-[2px]" viewBox="0 0 20 20" fill="none"><path d="M4 2v11L18 17M4 13l-3 5M4 13l11-3" stroke="#40a050"/><path d="M4 2v8" stroke="#2a3a90" stroke-width="1.5"/></svg>
      <svg class="w-5 h-5 ml-[4px]" viewBox="0 0 20 20"><path d="M3 4h14v13H3z" fill="#f08898"/><path d="M1 10h18M10 1v18" stroke="#b01830" stroke-dasharray="3 1"/></svg>
      <svg class="w-5 h-5 ml-[3px]" viewBox="0 0 20 20"><path d="M1 2h18v16H1z" fill="#f8e0b0" stroke="#e09050"/><circle cx="10" cy="10" r="5.5" fill="none" stroke="#5020d0" stroke-width="2"/></svg>
      <svg class="w-5 h-5 ml-[3px]" viewBox="0 0 20 20"><path d="M1 15L15 6l3 4L5 19z" fill="#7a20a8"/><path d="M14 0l2 5-3 1z" fill="#e8e020"/></svg>
      <svg class="w-5 h-5 ml-[3px]" viewBox="0 0 20 20" fill="#f0e8ec" stroke="#c08090"><path d="M3 3l10 2 4 5v7H8l-5-5z"/><path d="M8 9h9M8 9v8M3 3l5 6"/></svg>
      <svg class="w-5 h-5 ml-[3px]" viewBox="0 0 20 20"><path d="M3 6l6-4 3 4-5 4z" fill="#607020"/><path d="M8 10l5-5 5 6-7 7z" fill="#f4f4d8" stroke="#b8b8a0"/></svg>
      <svg class="w-5 h-5 ml-[3px]" viewBox="0 0 20 20" fill="none"><circle cx="10" cy="10" r="7.5" stroke="#444" stroke-width="1.3"/></svg>
      <span class="ml-[3px] w-[6px] text-center text-[7px] leading-none">▾</span>
    </div>

    <!-- status -->
    <div class="h-[15px] flex items-center bg-[#e6e6e6] border-b border-[#aaa] text-[9px] font-bold leading-none">
      <span class="ml-[448px] bg-[#f4f4f4] h-[13px] flex items-center px-px">全部 <span class="ml-[5px]">1</span></span>
      <span class="ml-auto mr-[39px] w-[10px] h-[10px] bg-[#c8d4e8] border border-[#778] flex items-center justify-center"><i class="block w-[5px] h-[3px] bg-[#3a68a8]"></i></span>
    </div>
  </div>
</div>
</body>
</html>
